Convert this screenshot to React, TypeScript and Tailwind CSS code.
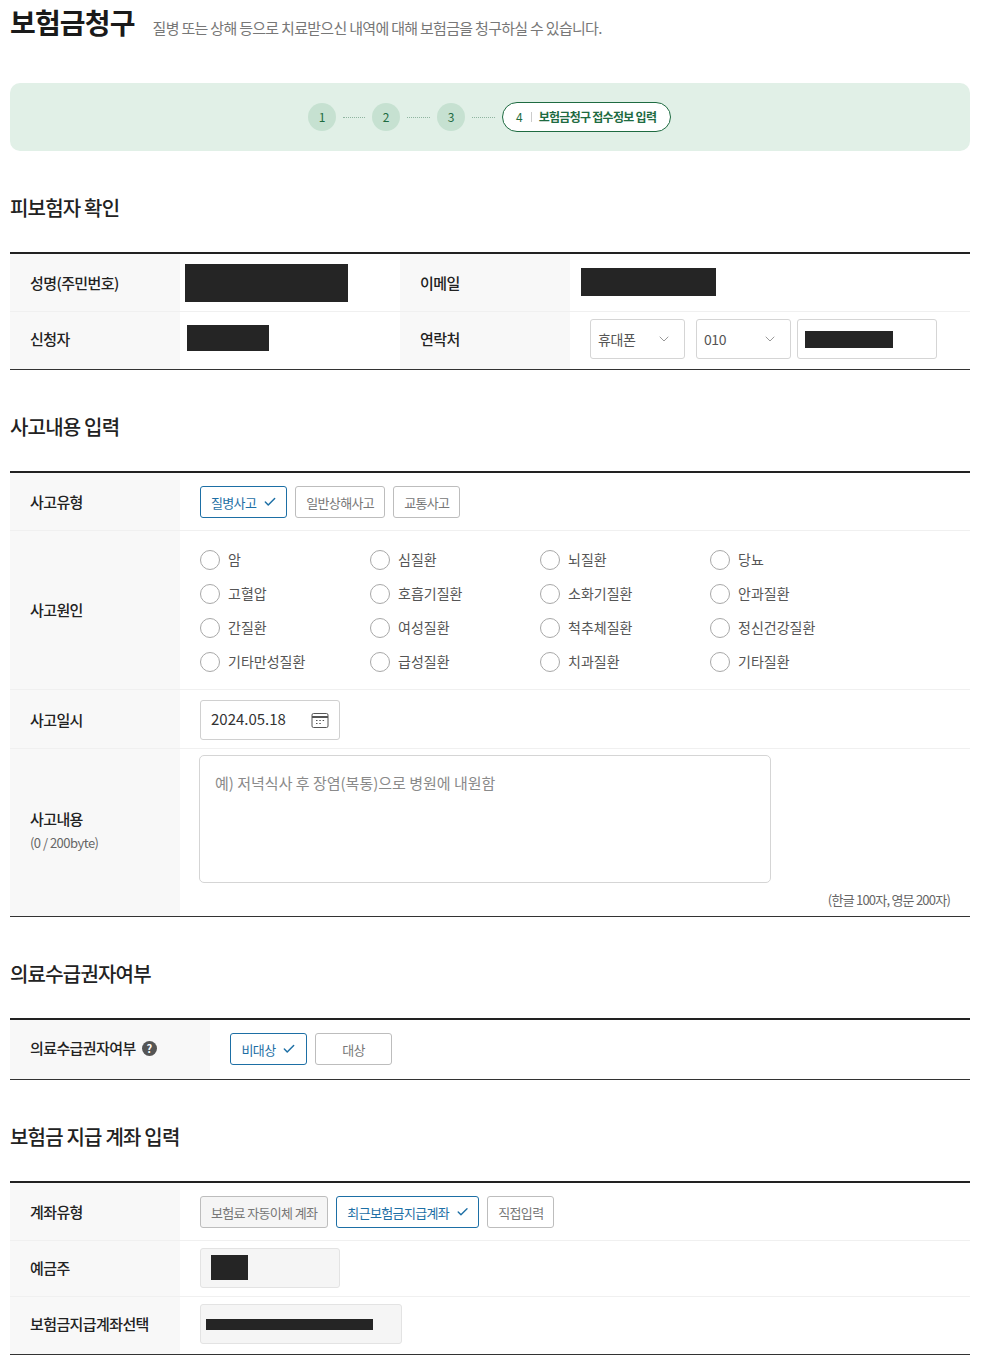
import React from "react"
import { Check, ChevronDown } from "lucide-react"

const labelCell =
  "flex shrink-0 items-center bg-[#f8f8f8] pt-[2px] pl-5 text-[15px] font-medium tracking-[-0.04em] text-[#222]"

const Heading = ({ children, className }: { children: React.ReactNode; className: string }) => (
  <h2 className={`text-[20px] leading-[30px] font-medium tracking-[-0.04em] text-[#222] ${className}`}>
    {children}
  </h2>
)

const Chip = ({
  label,
  active,
  muted,
  className = "",
}: {
  label: string
  active?: boolean
  muted?: boolean
  className?: string
}) => (
  <div
    className={`flex h-8 items-center justify-center gap-[6px] rounded-[3px] border px-[10px] pt-[2px] text-[13px] tracking-[-0.05em] whitespace-nowrap ${
      active
        ? "border-[#1d6fa5] text-[#1d6fa5]"
        : muted
          ? "border-[#bdbdbd] bg-[#f5f5f5] text-[#777]"
          : "border-[#bdbdbd] text-[#777]"
    } ${className}`}
  >
    <span>{label}</span>
    {active && <Check size={14} strokeWidth={2.5} className="translate-x-px -translate-y-px" />}
  </div>
)

const Select = ({ label, className }: { label: string; className: string }) => (
  <div
    className={`flex h-10 items-center justify-between rounded-[3px] border border-[#d5d5d5] pr-3 pl-[7px] text-[14px] tracking-[-0.03em] text-[#555] ${className}`}
  >
    <span>{label}</span>
    <ChevronDown size={16} strokeWidth={1.5} className="text-[#999]" />
  </div>
)

const Radio = ({ label }: { label: string }) => (
  <div className="flex h-[34px] items-center gap-2">
    <span className="size-5 translate-y-px rounded-full border border-[#a8a8a8] bg-white" />
    <span className="text-[14px] text-[#555]">{label}</span>
  </div>
)

const causes = [
  "암",
  "심질환",
  "뇌질환",
  "당뇨",
  "고혈압",
  "호흡기질환",
  "소화기질환",
  "안과질환",
  "간질환",
  "여성질환",
  "척추체질환",
  "정신건강질환",
  "기타만성질환",
  "급성질환",
  "치과질환",
  "기타질환",
]

const Step = ({ n }: { n: number }) => (
  <div className="flex size-7 items-center justify-center rounded-full bg-[#c6e1d1] text-[12px] text-[#1e6b41]">
    {n}
  </div>
)

const Dots = ({ className = "w-[23px]" }: { className?: string }) => (
  <div className={`mx-[7px] border-t border-dotted border-[#8fb5a0] ${className}`} />
)

export default function App() {
  return (
    <div className="w-[991px] bg-white pr-[21px] pl-[10px] font-['Noto_Sans_CJK_KR',sans-serif]">
      <div className="flex h-[83px] items-start">
        <h1 className="text-[28px] leading-[44px] font-bold tracking-[-0.03em] text-[#1a1a1a]">보험금청구</h1>
        <p className="mt-[16px] ml-[18px] text-[15px] leading-[24px] tracking-[-0.047em] text-[#777]">
          질병 또는 상해 등으로 치료받으신 내역에 대해 보험금을 청구하실 수 있습니다.
        </p>
      </div>

      <div className="flex h-[68px] items-center justify-center rounded-[10px] bg-[#e1f0e7] pr-px">
        <Step n={1} />
        <Dots className="w-[22px]" />
        <Step n={2} />
        <Dots />
        <Step n={3} />
        <Dots />
        <div className="flex h-[30px] w-[169px] items-center rounded-full border border-[#1e6b41] bg-white pl-[13px] text-[12px] text-[#1e6b41]">
          <span>4</span>
          <span className="mr-[7px] ml-[8px] h-[10px] w-px bg-[#ccc]" />
          <span className="font-bold tracking-[-0.06em]">보험금청구 접수정보 입력</span>
        </div>
      </div>

      <Heading className="mt-[42px]">피보험자 확인</Heading>
      <section className="mt-[29px] border-t-2 border-b border-t-[#222] border-b-[#333]">
        <div className="flex h-[58px] border-b border-[#f0f0f0]">
          <div className={`${labelCell} w-[170px]`}>성명(주민번호)</div>
          <div className="flex w-[220px] items-center pl-[5px]">
            <div className="h-[38px] w-[163px] bg-[#252525]" />
          </div>
          <div className={`${labelCell} w-[170px]`}>이메일</div>
          <div className="flex flex-1 items-center pb-[2px] pl-[11px]">
            <div className="h-[28px] w-[135px] bg-[#252525]" />
          </div>
        </div>
        <div className="flex h-[57px]">
          <div className={`${labelCell} w-[170px] pb-[5px]`}>신청자</div>
          <div className="flex w-[220px] items-center pb-[5px] pl-[7px]">
            <div className="h-[26px] w-[82px] bg-[#252525]" />
          </div>
          <div className={`${labelCell} w-[170px] pb-[5px]`}>연락처</div>
          <div className="flex flex-1 items-center pb-[3px] pl-5">
            <Select label="휴대폰" className="w-[95px]" />
            <Select label="010" className="ml-[11px] w-[95px]" />
            <div className="ml-[6px] flex h-10 w-[140px] items-center rounded-[3px] border border-[#d5d5d5] pl-[7px]">
              <div className="h-[17px] w-[88px] bg-[#252525]" />
            </div>
          </div>
        </div>
      </section>

      <Heading className="mt-[42px]">사고내용 입력</Heading>
      <section className="mt-[29px] border-t-2 border-b border-t-[#222] border-b-[#333]">
        <div className="flex h-[58px] border-b border-[#f0f0f0]">
          <div className={`${labelCell} w-[170px]`}>사고유형</div>
          <div className="flex flex-1 items-center gap-2 pl-5">
            <Chip label="질병사고" active />
            <Chip label="일반상해사고" />
            <Chip label="교통사고" />
          </div>
        </div>
        <div className="flex h-[159px] border-b border-[#f0f0f0]">
          <div className={`${labelCell} w-[170px] pb-[2px]`}>사고원인</div>
          <div className="grid flex-1 grid-cols-[170px_170px_170px_170px] content-center pl-5">
            {causes.map((c) => (
              <Radio key={c} label={c} />
            ))}
          </div>
        </div>
        <div className="flex h-[59px] border-b border-[#f0f0f0]">
          <div className={`${labelCell} w-[170px]`}>사고일시</div>
          <div className="flex flex-1 items-center pt-[2px] pl-5">
            <div className="flex h-10 w-[140px] items-center justify-between rounded-[3px] border border-[#d0d0d0] px-[10px] text-[15px] text-[#333]">
              <span className="pb-[2px]">2024.05.18</span>
              <svg width="18" height="17" viewBox="0 0 18 17" fill="none" stroke="#555">
                <rect x="1" y="1.5" width="16" height="14" rx="1.5" />
                <path d="M1 5h16" strokeWidth="2" />
                <path d="M5 8.5h1.5M8.3 8.5h1.5M11.6 8.5h1.5M5 11.5h1.5M8.3 11.5h1.5" />
              </svg>
            </div>
          </div>
        </div>
        <div className="flex h-[167px]">
          <div className={`${labelCell} w-[170px] flex-col !items-start justify-center pb-[7px]`}>
            <span>사고내용</span>
            <span className="mt-[3px] text-[13px] font-normal tracking-[-0.04em] text-[#666]">(0 / 200byte)</span>
          </div>
          <div className="flex flex-1 flex-col pt-[6px] pr-5 pl-[19px]">
            <div className="h-[128px] w-[572px] rounded-[5px] border border-[#d5d5d5] px-[15px] pt-[15px] text-[15px] leading-[24px] text-[#8a8a8a]">
              예) 저녁식사 후 장염(복통)으로 병원에 내원함
            </div>
            <p className="mt-[7px] text-right text-[13px] leading-[20px] tracking-[-0.06em] text-[#666]">
              (한글 100자, 영문 200자)
            </p>
          </div>
        </div>
      </section>

      <Heading className="mt-[42px]">의료수급권자여부</Heading>
      <section className="mt-[29px] border-t-2 border-b border-t-[#222] border-b-[#333]">
        <div className="flex h-[59px]">
          <div className={`${labelCell} w-[200px] gap-[6px] pb-[4px]`}>
            의료수급권자여부
            <span className="flex size-[15px] items-center justify-center rounded-full bg-[#555] text-[11px] font-bold text-white">
              ?
            </span>
          </div>
          <div className="flex flex-1 items-center gap-2 pb-[2px] pl-5">
            <Chip label="비대상" active className="w-[77px]" />
            <Chip label="대상" className="w-[77px]" />
          </div>
        </div>
      </section>

      <Heading className="mt-[42px]">보험금 지급 계좌 입력</Heading>
      <section className="mt-[29px] border-t-2 border-b border-t-[#222] border-b-[#333]">
        <div className="flex h-[58px] border-b border-[#f0f0f0]">
          <div className={`${labelCell} w-[170px]`}>계좌유형</div>
          <div className="flex flex-1 items-center gap-2 pl-5">
            <Chip label="보험료 자동이체 계좌" muted />
            <Chip label="최근보험금지급계좌" active className="w-[143px]" />
            <Chip label="직접입력" className="w-[67px]" />
          </div>
        </div>
        <div className="flex h-[56px] border-b border-[#f0f0f0]">
          <div className={`${labelCell} w-[170px] pb-[2px]`}>예금주</div>
          <div className="flex flex-1 items-center pb-[2px] pl-5">
            <div className="flex h-10 w-[140px] items-center rounded-[3px] border border-[#e3e3e3] bg-[#f5f5f5] pl-[10px]">
              <div className="h-[25px] w-[37px] bg-[#252525]" />
            </div>
          </div>
        </div>
        <div className="flex h-[57px]">
          <div className={`${labelCell} w-[170px] pb-[4px]`}>보험금지급계좌선택</div>
          <div className="flex flex-1 items-center pb-[4px] pl-5">
            <div className="flex h-10 w-[202px] items-center rounded-[3px] border border-[#e3e3e3] bg-[#f5f5f5] pl-[5px]">
              <div className="mt-[2px] h-[11px] w-[167px] bg-[#252525]" />
            </div>
          </div>
        </div>
      </section>
    </div>
  )
}
